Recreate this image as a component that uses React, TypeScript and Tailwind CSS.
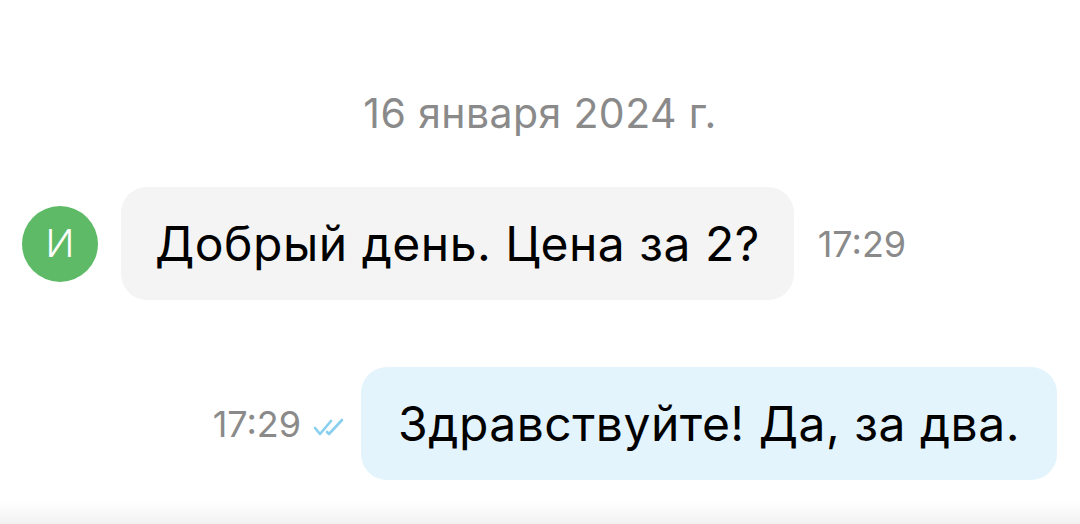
export default function App() {
  return (
    <div className="relative w-full h-[524px] overflow-hidden bg-white font-['Inter','Noto_Sans',sans-serif]">
      {/* DATE */}
      <div className="pt-[86px] text-center text-[41px] leading-[54px] tracking-[0.4px] text-[#8a8a8a]">
        16 января 2024 г.
      </div>

      {/* INCOMING */}
      <div className="mt-[47px] flex items-center pl-[22px]">
        <div className="flex h-[76px] w-[76px] items-center justify-center rounded-full bg-[#5fba67] text-[38px] font-light text-white">
          И
        </div>
        <div className="ml-[23px] flex h-[113px] items-center rounded-[26px] bg-[#f4f4f4] px-[34px] text-[48px] tracking-[0.5px] text-black">
          Добрый день. Цена за 2?
        </div>
        <span className="ml-[24px] text-[36px] text-[#8a8a8a]">17:29</span>
      </div>

      {/* OUTGOING */}
      <div className="mt-[67px] flex items-center justify-end pr-[23px]">
        <span className="text-[36px] text-[#8a8a8a]">17:29</span>
        <svg className="ml-[12px] mt-[6px]" width="34" height="20" viewBox="0 0 34 20" fill="none">
          <path d="M2 11 L7 17 L18 4" stroke="#88cff0" strokeWidth="2.6" strokeLinecap="round" strokeLinejoin="round" />
          <path d="M14 15 L16 17 L29 3" stroke="#88cff0" strokeWidth="2.6" strokeLinecap="round" strokeLinejoin="round" />
        </svg>
        <div className="ml-[14px] flex h-[113px] items-center rounded-[26px] bg-[#e4f4fd] px-[37px] text-[48px] tracking-[0.5px] text-black">
          Здравствуйте! Да, за два.
        </div>
      </div>

      {/* bottom shade */}
      <div className="absolute bottom-0 left-0 right-0 h-[22px] bg-gradient-to-b from-white to-[#f1f1f1]" />
    </div>
  )
}
